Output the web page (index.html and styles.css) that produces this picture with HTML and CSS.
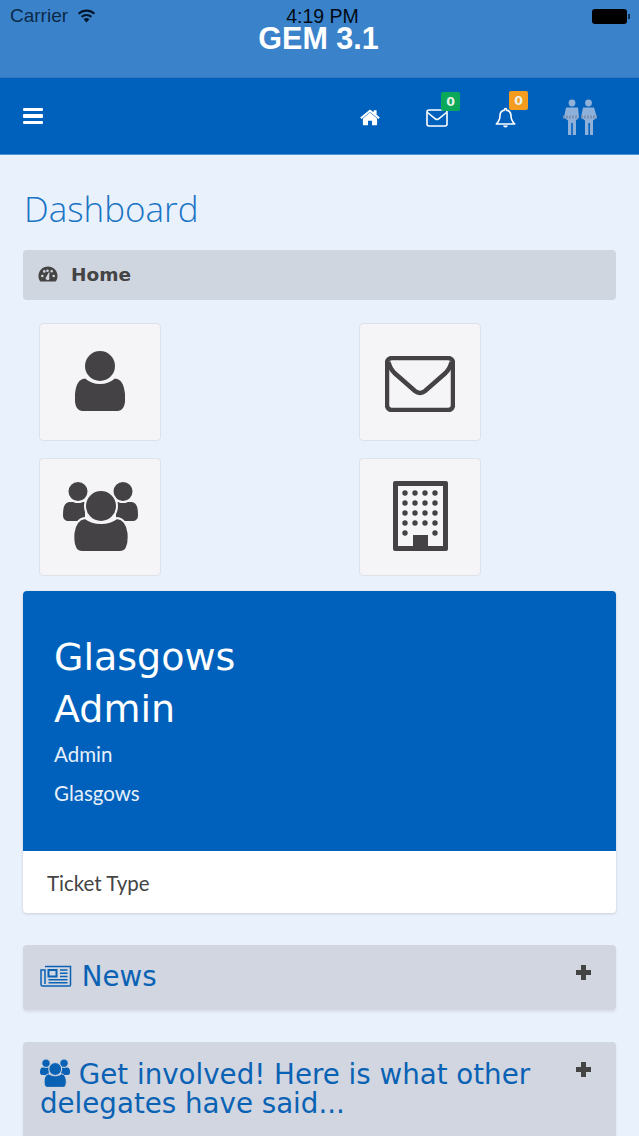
FILE: index.html
```html
<!DOCTYPE html>
<html>

<head>
    <title>GEM 3.1</title>
    <link rel="stylesheet" href="styles.css">
</head>

<body>
    <header class="app-header">
        <div class="status-bar">
            <div class="status-left">
                <span>Carrier</span>
                <svg class="wifi" width="19" height="14" viewBox="0 0 19 14">
                    <path d="M9.5 13.5 6.6 10.2a4.3 4.3 0 0 1 5.8 0z" fill="#04162c" />
                    <path d="M4.6 7.9a7.3 7.3 0 0 1 9.8 0M1.6 4.7a11.6 11.6 0 0 1 15.8 0" fill="none" stroke="#04162c" stroke-width="2.2" />
                </svg>
            </div>
            <span class="status-time">4:19 PM</span>
            <div class="battery"><i></i></div>
        </div>
        <h1 class="app-title">GEM 3.1</h1>
    </header>

    <nav class="nav-bar">
        <div class="burger"><i></i><i></i><i></i></div>
        <div class="nav-icons">
            <svg class="nav-home" width="20" height="17" viewBox="0 0 20 17">
                <path d="M10 3.6 2.9 9.4v6.2c0 .4.3.7.7.7h4.4v-4.6h4v4.6h4.4c.4 0 .7-.3.7-.7V9.4z" fill="#fff" />
                <path d="M.2 8.4 10 .4l3.600 2.900V1.200h3v4.600l3.200 2.600-1.300 1.500L10 3.100 1.500 9.900z" fill="#fff" />
            </svg>
            <div class="nav-item nav-mail">
                <svg width="22" height="18" viewBox="0 0 22 18">
                    <rect x="1" y="1" width="20" height="16" rx="2" fill="none" stroke="#fff" stroke-width="1.6" />
                    <path d="M1.5 3.5 9.6 10c.8.6 2 .6 2.8 0l8.1-6.5" fill="none" stroke="#fff" stroke-width="1.6" />
                </svg>
                <span class="badge badge-green">0</span>
            </div>
            <div class="nav-item nav-bell">
                <svg width="21" height="22" viewBox="0 0 21 22">
                    <path d="M10.5 1.5c.6 0 1 .4 1 1v.6c3 .5 4.500 2.800 4.500 5.600 0 4.400 1.400 6 3.700 8.300H1.300C3.600 14.700 5 13.100 5 8.700c0-2.800 1.500-5.100 4.500-5.600v-.6c0-.6.400-1 1-1z" fill="none" stroke="#fff" stroke-width="1.6" stroke-linejoin="round" />
                    <path d="M8 18.500a2.600 2.600 0 0 0 5 0z" fill="#fff" />
                </svg>
                <span class="badge badge-orange">0</span>
            </div>
            <svg class="nav-logo" width="36" height="37" viewBox="0 0 36 37">
                <g fill="#8fb0d8">
                    <circle cx="10" cy="4" r="3.400" />
                    <circle cx="26.500" cy="4" r="3.400" />
                    <path d="M4 8.500h12l1 10-3 3V36h-3.200V24h-1.600v12H6V21.500l-4-3z" />
                    <path d="M21 8.500h11l3 10-4 3V36h-3V24h-1.600v12H23V21.500l-4-3z" />
                </g>
                <path d="M1 18h15M19 18h16" stroke="#7c93b3" stroke-width="3" stroke-dasharray="2 1" />
            </svg>
        </div>
    </nav>

    <main class="content">
        <h2 class="page-title">Dashboard</h2>

        <div class="breadcrumb">
            <svg width="20" height="16" viewBox="0 0 20 16">
                <path fill-rule="evenodd" fill="#444" d="M10 .6C4.700.6.500 4.700.500 10c0 1.900.5 3.500 1.400 4.900.2.3.5.5.9.5h14.400c.4 0 .7-.2.9-.5.9-1.400 1.400-3 1.400-4.900C19.500 4.700 15.300.6 10 .6zM4.300 11.300a1.300 1.300 0 1 1 0-2.600 1.300 1.300 0 0 1 0 2.600zm2-4.600a1.300 1.300 0 1 1 0-2.600 1.300 1.300 0 0 1 0 2.600zm4.500-1.900a1.300 1.300 0 1 1-2.600 0 1.300 1.300 0 0 1 2.600 0zm.7 7.800a1.900 1.900 0 1 1-3.300-1.700l2.500-4.500 .8.200-.3 5zm2.200-6a1.300 1.300 0 1 1 0-2.600 1.300 1.300 0 0 1 0 2.600zm2 4.700a1.300 1.300 0 1 1 0-2.600 1.300 1.300 0 0 1 0 2.600z" />
            </svg>
            <span>Home</span>
        </div>

        <div class="tiles">
            <a class="tile">
                <svg width="50" height="60" viewBox="0 0 50 60">
                    <path d="M10 27.500C14 31 19 33 25 33s11-2 15-5.500c6 .5 9 5.500 10 15.500.5 7 0 12-3 15-1 1.500-3 2-6 2H9c-3 0-5-.5-6-2-3-3-3.500-8-3-15 1-10 4-15 10-15.500z" fill="#444244" />
                    <circle cx="25" cy="15" r="15" fill="#444244" />
                </svg>
            </a>
            <a class="tile tile-mail">
                <svg width="70" height="56" viewBox="0 0 70 56">
                    <rect x="2" y="2" width="66" height="52" rx="5" fill="none" stroke="#444244" stroke-width="4.500" />
                    <path d="M3.500 6c1 5 3 8 6 11L30 35c3 2.500 7 2.500 10 0l20.500-18c3-3 5-6 6-11" fill="none" stroke="#444244" stroke-width="4.500" />
                </svg>
            </a>
            <a class="tile">
                <svg width="75" height="70" viewBox="0 0 75 70">
                    <g fill="#444244" stroke="#f5f5f7" stroke-width="2">
                        <path d="M6 21h16v19H6c-4 0-6-2-6-6 0-7 1-12 6-13z" stroke="none" />
                        <path d="M69 21H53v19h16c4 0 6-2 6-6 0-7-1-12-6-13z" stroke="none" />
                        <circle cx="15" cy="10.500" r="10.500" />
                        <circle cx="60" cy="10.500" r="10.500" />
                        <path d="M22 37c4 3 9.500 5 16 5s12-2 16-5c7 1 10.500 7 11.500 15 .5 7 0 11-1.500 14-1 3-3.500 5-7.500 5h-37c-4 0-6.500-2-7.500-5-1.500-3-2-7-1.500-14 1-8 4.500-14 11.500-15z" />
                        <circle cx="38" cy="25" r="16" />
                    </g>
                </svg>
            </a>
            <a class="tile">
                <svg width="55" height="70" viewBox="0 0 55 70">
                    <path fill="#444244" fill-rule="evenodd" d="M2 0h51a2 2 0 0 1 2 2v66a2 2 0 0 1-2 2H2a2 2 0 0 1-2-2V2a2 2 0 0 1 2-2zm3 5v60h15V54h15v11h15V5z" />
                    <g fill="#444244">
                        <circle cx="12" cy="12" r="2.700" /><circle cx="22" cy="12" r="2.700" /><circle cx="32" cy="12" r="2.700" /><circle cx="42" cy="12" r="2.700" />
                        <circle cx="12" cy="22" r="2.700" /><circle cx="22" cy="22" r="2.700" /><circle cx="32" cy="22" r="2.700" /><circle cx="42" cy="22" r="2.700" />
                        <circle cx="12" cy="32" r="2.700" /><circle cx="22" cy="32" r="2.700" /><circle cx="32" cy="32" r="2.700" /><circle cx="42" cy="32" r="2.700" />
                        <circle cx="12" cy="42" r="2.700" /><circle cx="22" cy="42" r="2.700" /><circle cx="32" cy="42" r="2.700" /><circle cx="42" cy="42" r="2.700" />
                        <circle cx="12" cy="52" r="2.700" /><circle cx="42" cy="52" r="2.700" />
                    </g>
                </svg>
            </a>
        </div>

        <section class="profile-card">
            <div class="profile-top">
                <div class="profile-name">Glasgows<br>Admin</div>
                <p>Admin</p>
                <p>Glasgows</p>
            </div>
            <div class="profile-bottom">Ticket Type</div>
        </section>

        <section class="panel panel-news">
            <h3>
                <svg class="news-icon" width="32" height="22" viewBox="0 0 32 22">
                    <g fill="none" stroke="#0a62b4" stroke-width="1.500">
                        <path d="M5 1.500h25.500v18.500a1 1 0 0 1-1 1H2.500A1.500 1.500 0 0 1 1 19.500V5h4v14" />
                        <rect x="8.500" y="5" width="8" height="6.500" stroke-width="2" />
                        <path d="M20 5h7.500M20 8.200h7.500M20 11.500h7.500M8.500 14.700h19M8.500 17.700h19" />
                    </g>
                </svg>
                News
            </h3>
            <span class="plus"></span>
        </section>

        <section class="panel panel-involved">
            <h3>
                <svg class="group-icon" width="30" height="28" viewBox="0 0 75 70">
                    <g fill="#0a62b4" stroke="#d1d6e0" stroke-width="2.500">
                        <path d="M6 21h16v19H6c-4 0-6-2-6-6 0-7 1-12 6-13z" stroke="none" />
                        <path d="M69 21H53v19h16c4 0 6-2 6-6 0-7-1-12-6-13z" stroke="none" />
                        <circle cx="15" cy="10.500" r="10.500" />
                        <circle cx="60" cy="10.500" r="10.500" />
                        <path d="M22 37c4 3 9.500 5 16 5s12-2 16-5c7 1 10.500 7 11.500 15 .5 7 0 11-1.500 14-1 3-3.500 5-7.500 5h-37c-4 0-6.500-2-7.500-5-1.500-3-2-7-1.500-14 1-8 4.500-14 11.500-15z" />
                        <circle cx="38" cy="25" r="16" />
                    </g>
                </svg>
                Get involved! Here is what other delegates have said...
            </h3>
            <span class="plus"></span>
        </section>
    </main>
</body>

</html>
```

FILE: styles.css
```css
/* General Styles */
* {
    box-sizing: border-box;
}

html,
body {
    margin: 0;
    height: 1136px;
    overflow: hidden;
}

body {
    background-color: #e9f1fd;
    font-family: "DejaVu Sans", sans-serif;
}

/* Header */
.app-header {
    height: 78px;
    background-color: #3a83cb;
    border-bottom: 1px solid #3177c0;
    padding-top: 7px;
}

.status-bar {
    display: flex;
    align-items: center;
    justify-content: space-between;
    height: 18px;
    padding: 0 9px 0 10px;
    font-family: "Liberation Sans", sans-serif;
    font-size: 19px;
    line-height: 18px;
    color: #04162c;
}

.status-left {
    display: flex;
    align-items: center;
    gap: 9px;
    width: 180px;
    color: #0c2949;
}

.status-time {
    margin-left: 5px;
    font-size: 19.5px;
    color: #020a14;
}

.battery {
    display: flex;
    align-items: center;
    justify-content: flex-end;
    width: 180px;
}

.battery i {
    display: block;
    width: 35px;
    height: 15px;
    background-color: #000;
    border-radius: 3px;
}

.battery::after {
    content: "";
    width: 2px;
    height: 5px;
    margin-left: 1px;
    background-color: #0b2f55;
}

.app-title {
    margin: 0;
    padding-right: 2px;
    text-align: center;
    font-family: "Liberation Sans", sans-serif;
    font-size: 30.5px;
    line-height: 26px;
    font-weight: bold;
    color: #fff;
}

/* Nav */
.nav-bar {
    display: flex;
    align-items: center;
    justify-content: space-between;
    height: 77px;
    background-color: #0061bd;
    border-bottom: 1px solid #4d93d8;
    padding-left: 23px;
}

.burger {
    display: flex;
    flex-direction: column;
    gap: 3px;
    width: 20px;
}

.burger i {
    display: block;
    height: 3.5px;
    background-color: #fff;
    border-radius: 1px;
}

.nav-icons {
    display: flex;
    align-items: center;
    height: 100%;
}

.nav-home {
    margin-right: 46px;
    margin-top: 2px;
}

.nav-item {
    position: relative;
    display: flex;
}

.nav-mail {
    margin-right: 47px;
    margin-top: 4px;
}

.nav-bell {
    margin-right: 46px;
    margin-top: 3px;
}

.nav-logo {
    margin-right: 41px;
    margin-top: 3px;
}

.badge {
    position: absolute;
    top: -17px;
    width: 19px;
    height: 19px;
    border-radius: 2px;
    color: #e8f3ea;
    font-size: 12.5px;
    font-weight: bold;
    line-height: 19px;
    text-align: center;
}

.nav-mail .badge {
    left: 15px;
}

.nav-bell .badge {
    left: 14px;
    top: -16px;
}

.badge-green {
    background-color: #0aa858;
}

.badge-orange {
    background-color: #f39c1f;
}

/* Content */
.content {
    padding: 0 23px;
}

.page-title {
    margin: 32px 0 0 1px;
    font-family: "Open Sans", sans-serif;
    font-size: 35px;
    line-height: 44px;
    font-weight: 300;
    color: #1a75c4;
}

.breadcrumb {
    display: flex;
    align-items: center;
    gap: 13px;
    height: 50px;
    margin-top: 19px;
    padding-left: 15px;
    padding-bottom: 2px;
    background-color: #d0d6e0;
    border-radius: 4px;
    font-size: 18.5px;
    font-weight: bold;
    color: #444;
}

.tiles {
    display: grid;
    grid-template-columns: 320px 122px;
    gap: 17px 0;
    margin-top: 23px;
    padding-left: 16px;
}

.tile {
    display: flex;
    align-items: center;
    justify-content: center;
    width: 122px;
    height: 118px;
    padding-bottom: 2px;
    background-color: #f5f5f7;
    border: 1px solid #dde1e8;
    border-radius: 4px;
}

.tile-mail svg {
    margin-top: 5px;
}

/* Profile card */
.profile-card {
    margin-top: 15px;
    border-radius: 4px;
    background-color: #fff;
    box-shadow: 0 1px 3px rgba(0, 0, 0, 0.15);
    overflow: hidden;
}

.profile-top {
    height: 260px;
    padding: 40px 31px 0 31px;
    background-color: #0061bd;
    color: #fff;
}

.profile-name {
    font-size: 38px;
    line-height: 52px;
    margin-bottom: 7px;
}

.profile-top p {
    margin: 0 0 15px 0;
    font-family: Lato, sans-serif;
    font-size: 20.5px;
    line-height: 24px;
    color: #e6f0fa;
}

.profile-bottom {
    height: 62px;
    padding-left: 24px;
    font-family: Lato, sans-serif;
    font-size: 20.5px;
    line-height: 64px;
    color: #444;
}

/* Panels */
.panel {
    position: relative;
    background-color: #d1d6e0;
    border-radius: 4px;
    box-shadow: 0 2px 3px rgba(0, 0, 0, 0.08);
}

.panel h3 {
    margin: 0;
    font-size: 27.7px;
    font-weight: normal;
    line-height: 29px;
    color: #0a62b4;
}

.panel-news {
    height: 65px;
    margin-top: 32px;
    padding: 17px 17px 0 17px;
}

.panel-involved {
    height: 120px;
    margin-top: 32px;
    padding: 17px 60px 0 17px;
}

.news-icon {
    vertical-align: -1px;
    margin-right: 1px;
}

.group-icon {
    vertical-align: -3px;
}

.plus {
    position: absolute;
    top: 20px;
    right: 25px;
    width: 15px;
    height: 15px;
    background:
        linear-gradient(#444, #444) center / 15px 5px no-repeat,
        linear-gradient(#444, #444) center / 5px 15px no-repeat;
    border-radius: 1px;
}
```
